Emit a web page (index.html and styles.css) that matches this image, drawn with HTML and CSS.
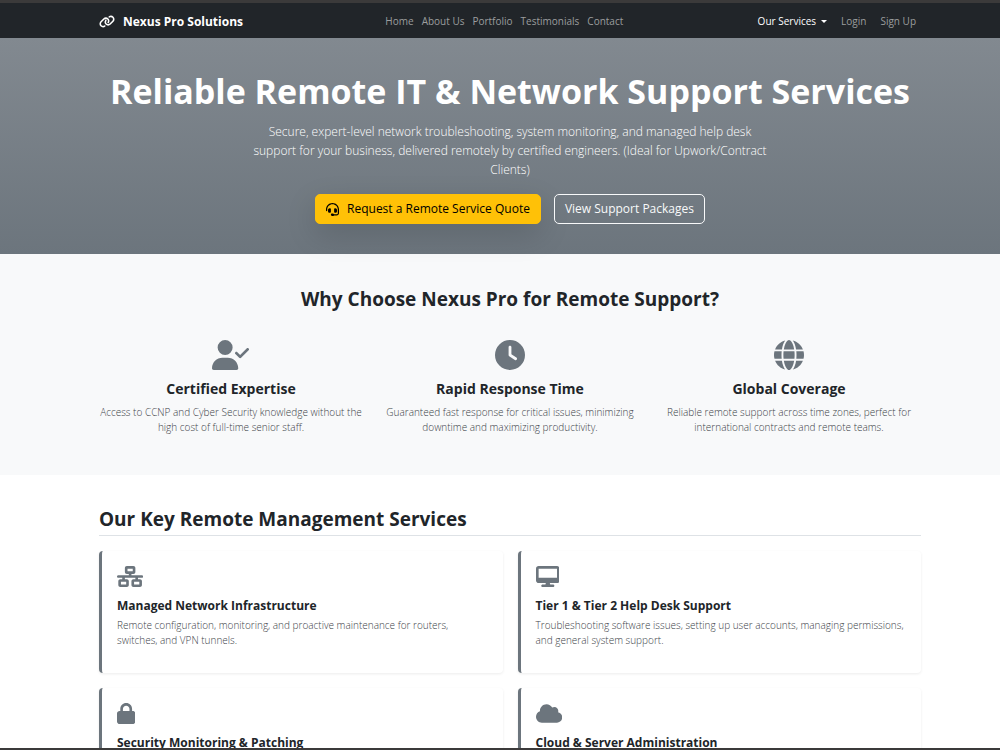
FILE: index.html
```html
<!DOCTYPE html>
<html lang="en">
<head>
<meta charset="utf-8">
<title>Nexus Pro Solutions</title>
<meta name="viewport" content="width=device-width, initial-scale=1">
<link rel="stylesheet" href="styles.css">
</head>

<body>

<header class="navbar">
  <div class="container navbar-inner">
    <a class="brand" href="#">
      <svg class="brand-icon" viewBox="0 0 640 512" aria-hidden="true"><path d="M579.8 267.7c56.5-56.5 56.5-148 0-204.5c-50-50-128.8-56.5-186.3-15.4l-1.6 1.1c-14.4 10.3-17.7 30.3-7.4 44.6s30.3 17.7 44.6 7.4l1.6-1.1c32.1-22.9 76-19.3 103.8 8.6c31.5 31.5 31.5 82.5 0 114L422.3 334.8c-31.5 31.5-82.5 31.5-114 0c-27.9-27.9-31.5-71.8-8.6-103.8l1.1-1.6c10.3-14.4 6.9-34.4-7.4-44.6s-34.4-6.9-44.6 7.4l-1.1 1.6C206.5 251.2 213 330 263 380c56.5 56.5 148 56.5 204.5 0L579.8 267.7zM60.2 244.3c-56.5 56.5-56.5 148 0 204.5c50 50 128.8 56.5 186.3 15.4l1.6-1.1c14.4-10.3 17.7-30.3 7.4-44.6s-30.3-17.7-44.6-7.4l-1.6 1.1c-32.1 22.9-76 19.3-103.8-8.6C74 372 74 321 105.5 289.5L217.7 177.2c31.5-31.5 82.5-31.5 114 0c27.9 27.9 31.5 71.8 8.6 103.9l-1.1 1.6c-10.3 14.4-6.9 34.4 7.4 44.6s34.4 6.9 44.6-7.4l1.1-1.6C433.5 260.8 427 182 377 132c-56.5-56.5-148-56.5-204.5 0L60.2 244.3z"/></svg>
      Nexus Pro Solutions
    </a>
    <nav class="nav-links">
      <a href="#">Home</a>
      <a href="#about">About Us</a>
      <a href="#portfolio">Portfolio</a>
      <a href="#testimonials">Testimonials</a>
      <a href="#contact">Contact</a>
    </nav>
    <div class="nav-user">
      <button class="dropdown" type="button" aria-haspopup="true">Our Services</button>
      <a href="#login">Login</a>
      <a href="#signup">Sign Up</a>
    </div>
  </div>
</header>

<section class="hero">
  <div class="container">
    <h1>Reliable Remote IT &amp; Network Support Services</h1>
    <p class="lead">Secure, expert-level network troubleshooting, system monitoring, and managed help desk support for your business, delivered remotely by certified engineers. (Ideal for Upwork/Contract Clients)</p>
    <div class="hero-buttons">
      <a class="btn btn-warning" href="#contact">
        <svg class="btn-icon" viewBox="0 0 512 512" aria-hidden="true"><path d="M256 48C141.1 48 48 141.1 48 256v40c0 13.3-10.7 24-24 24s-24-10.7-24-24V256C0 114.6 114.6 0 256 0S512 114.6 512 256V400.1c0 48.6-39.4 88-88.1 88L313.6 488c-8.3 14.3-23.8 24-41.6 24H240c-26.5 0-48-21.5-48-48s21.5-48 48-48h32c17.8 0 33.3 9.7 41.6 24l110.4 .1c22.1 0 40-17.9 40-40V256c0-114.9-93.1-208-208-208zM144 208h16c17.7 0 32 14.3 32 32V352c0 17.7-14.3 32-32 32H144c-35.3 0-64-28.7-64-64V272c0-35.3 28.7-64 64-64zm224 0c35.3 0 64 28.7 64 64v48c0 35.3-28.7 64-64 64H352c-17.7 0-32-14.3-32-32V240c0-17.7 14.3-32 32-32h16z"/></svg>
        Request a Remote Service Quote
      </a>
      <a class="btn btn-outline" href="#services">View Support Packages</a>
    </div>
  </div>
</section>

<section class="features" id="about">
  <div class="container">
    <h2>Why Choose Nexus Pro for Remote Support?</h2>
    <div class="feature-row">
      <div class="feature">
        <svg class="feature-icon" viewBox="0 0 640 512" aria-hidden="true"><path d="M96 128a128 128 0 1 1 256 0A128 128 0 1 1 96 128zM0 482.3C0 383.8 79.8 304 178.3 304h91.4C368.2 304 448 383.8 448 482.3c0 16.4-13.3 29.7-29.7 29.7H29.7C13.3 512 0 498.7 0 482.3zM625 177L497 305c-9.4 9.4-24.6 9.4-33.9 0l-64-64c-9.4-9.4-9.4-24.6 0-33.9s24.6-9.4 33.9 0l47 47L591 143c9.4-9.4 24.6-9.4 33.9 0s9.4 24.6 0 33.9z"/></svg>
        <h3>Certified Expertise</h3>
        <p>Access to CCNP and Cyber Security knowledge without the high cost of full-time senior staff.</p>
      </div>
      <div class="feature">
        <svg class="feature-icon" viewBox="0 0 512 512" aria-hidden="true"><path fill-rule="evenodd" d="M256 0a256 256 0 1 1 0 512A256 256 0 1 1 256 0zM232 120V256c0 8 4 15.5 10.7 20l96 64c11 7.4 25.9 4.4 33.3-6.7s4.4-25.9-6.7-33.3L280 243.2V120c0-13.3-10.7-24-24-24s-24 10.7-24 24z"/></svg>
        <h3>Rapid Response Time</h3>
        <p>Guaranteed fast response for critical issues, minimizing downtime and maximizing productivity.</p>
      </div>
      <div class="feature">
        <svg class="feature-icon" viewBox="0 0 512 512" aria-hidden="true"><path d="M352 256c0 22.2-1.2 43.6-3.3 64H163.3c-2.2-20.4-3.3-41.8-3.3-64s1.2-43.6 3.3-64H348.7c2.2 20.4 3.3 41.8 3.3 64zm28.8-64H503.9c5.3 20.5 8.1 41.9 8.1 64s-2.8 43.5-8.1 64H380.8c2.1-20.6 3.2-42 3.2-64s-1.1-43.4-3.2-64zm112.6-32H376.7c-10-63.9-29.8-117.4-55.3-151.6c78.3 20.7 142 77.5 171.9 151.6zm-149.1 0H167.7c6.1-36.4 15.5-68.6 27-94.7c10.5-23.6 22.2-40.7 33.5-51.5C239.4 3.2 248.7 0 256 0s16.6 3.2 27.8 13.8c11.3 10.8 23 27.9 33.5 51.5c11.6 26 20.9 58.2 27 94.7zm-209 0H18.6C48.6 85.9 112.2 29.1 190.6 8.4C165.1 42.6 145.3 96.1 135.3 160zM8.1 192H131.2c-2.1 20.6-3.2 42-3.2 64s1.1 43.4 3.2 64H8.1C2.8 299.5 0 278.1 0 256s2.8-43.5 8.1-64zM194.7 446.6c-11.6-26-20.9-58.2-27-94.6H344.3c-6.1 36.4-15.5 68.6-27 94.6c-10.5 23.6-22.2 40.7-33.5 51.5C272.6 508.8 263.3 512 256 512s-16.6-3.2-27.8-13.8c-11.3-10.8-23-27.9-33.5-51.5zM135.3 352c10 63.9 29.8 117.4 55.3 151.6C112.2 482.9 48.6 426.1 18.6 352H135.3zm358.1 0c-30 74.1-93.6 130.9-171.9 151.6c25.5-34.2 45.2-87.7 55.3-151.6H493.4z"/></svg>
        <h3>Global Coverage</h3>
        <p>Reliable remote support across time zones, perfect for international contracts and remote teams.</p>
      </div>
    </div>
  </div>
</section>

<section class="services" id="services">
  <div class="container">
    <h2>Our Key Remote Management Services</h2>
    <div class="card-grid">
      <div class="card">
        <svg class="card-icon" viewBox="0 0 640 512" aria-hidden="true"><path d="M256 64H384v64H256V64zM240 0c-26.5 0-48 21.5-48 48v96c0 26.5 21.5 48 48 48h48v32H32c-17.7 0-32 14.3-32 32s14.3 32 32 32h96v32H80c-26.5 0-48 21.5-48 48v96c0 26.5 21.5 48 48 48H240c26.5 0 48-21.5 48-48V368c0-26.5-21.5-48-48-48H192V288H448v32H400c-26.5 0-48 21.5-48 48v96c0 26.5 21.5 48 48 48H560c26.5 0 48-21.5 48-48V368c0-26.5-21.5-48-48-48H512V288h96c17.7 0 32-14.3 32-32s-14.3-32-32-32H352V192h48c26.5 0 48-21.5 48-48V48c0-26.5-21.5-48-48-48H240zM96 448V384H224v64H96zm320-64H544v64H416V384z" fill-rule="evenodd"/></svg>
        <h3>Managed Network Infrastructure</h3>
        <p>Remote configuration, monitoring, and proactive maintenance for routers, switches, and VPN tunnels.</p>
      </div>
      <div class="card">
        <svg class="card-icon" viewBox="0 0 576 512" aria-hidden="true"><path fill-rule="evenodd" d="M64 0C28.7 0 0 28.7 0 64V352c0 35.3 28.7 64 64 64H240l-10.7 32H160c-17.7 0-32 14.3-32 32s14.3 32 32 32H416c17.7 0 32-14.3 32-32s-14.3-32-32-32H346.7L336 416H512c35.3 0 64-28.7 64-64V64c0-35.3-28.7-64-64-64H64zM512 64V288H64V64H512z"/></svg>
        <h3>Tier 1 &amp; Tier 2 Help Desk Support</h3>
        <p>Troubleshooting software issues, setting up user accounts, managing permissions, and general system support.</p>
      </div>
      <div class="card">
        <svg class="card-icon" viewBox="0 0 448 512" aria-hidden="true"><path fill-rule="evenodd" d="M144 144v48H304V144c0-44.2-35.8-80-80-80s-80 35.8-80 80zM80 192V144C80 64.5 144.5 0 224 0s144 64.5 144 144v48h16c35.3 0 64 28.7 64 64V448c0 35.3-28.7 64-64 64H64c-35.3 0-64-28.7-64-64V256c0-35.3 28.7-64 64-64H80z"/></svg>
        <h3>Security Monitoring &amp; Patching</h3>
      </div>
      <div class="card">
        <svg class="card-icon" viewBox="0 0 640 512" aria-hidden="true"><path d="M0 336c0 79.5 64.5 144 144 144H512c70.7 0 128-57.3 128-128c0-61.9-44-113.6-102.4-125.4c4.1-10.7 6.4-22.4 6.4-34.6c0-53-43-96-96-96c-19.7 0-38.1 6-53.3 16.2C367 64.2 315.3 32 256 32C167.6 32 96 103.6 96 192c0 2.7 .1 5.4 .2 8.1C40.2 219.8 0 273.2 0 336z"/></svg>
        <h3>Cloud &amp; Server Administration</h3>
      </div>
    </div>
  </div>
</section>

</body>
</html>
```
FILE: styles.css
```css
* {box-sizing: border-box;}
html {height: 100%;}
body {
  margin: 0;
  height: 100%;
  overflow: hidden;
  border-top: 3px solid #3b3a3a;
  color: #212529;
  background: #fff;
  font: 10px/15px "Open Sans", "Noto Sans", sans-serif;
}
/* edge of the window along the bottom */
body::after {
  content: "";
  position: fixed;
  left: 0;
  right: 0;
  bottom: 0;
  height: 2px;
  background: #3b3a3a;
}
h1, h2, h3, p {margin: 0;}
a {color: inherit; text-decoration: none;}
svg {fill: currentColor;}

.navbar, .hero, .features, .services {padding-left: 20px;}
.container {
  max-width: 822px;
  margin: 0 auto;
}

/* navbar */
.navbar {
  color: #9b9d9e;
  background: #212529;
}
.navbar-inner {
  display: flex;
  align-items: center;
  justify-content: space-between;
  height: 35px;
  padding-top: 1px;
}
.brand {
  display: flex;
  align-items: center;
  gap: 8px;
  color: #fff;
  font-size: 12px;
  font-weight: 700;
}
.brand-icon {width: 16px; height: 13px;}
.nav-links {
  display: flex;
  gap: 8px;
  padding-left: 8px;
}
.nav-user {
  display: flex;
  gap: 14px;
  padding-right: 5px;
}
.dropdown {
  display: flex;
  align-items: center;
  gap: 5px;
  padding: 0;
  border: 0;
  color: #fff;
  background: none;
  font: inherit;
}
.dropdown::after {
  content: "";
  border: 3px solid transparent;
  border-top-color: currentColor;
  border-bottom: 0;
}

/* hero */
.hero {
  padding-top: 30px;
  padding-bottom: 30px;
  color: #fff;
  text-align: center;
  background: linear-gradient(#828990, #6c757d);
}
.hero h1 {
  font-size: 34px;
  line-height: 46px;
  font-weight: 700;
}
.lead {
  max-width: 520px;
  margin: 8px auto 15px;
  font-size: 12px;
  line-height: 19px;
  font-weight: 300;
}
.hero-buttons {
  display: flex;
  justify-content: center;
  gap: 13px;
}
.btn {
  display: flex;
  align-items: center;
  gap: 8px;
  padding: 5px 10px;
  border: 1px solid #f8f9fa;
  border-radius: 5px;
  color: #f8f9fa;
  font-size: 12px;
  line-height: 18px;
}
.btn-warning {
  border-color: #ffc107;
  color: #000;
  background: #ffc107;
  box-shadow: 0 10px 30px rgba(0, 0, 0, .15);
}
.btn-icon {width: 13px; height: 13px;}

/* features */
.features {
  padding-top: 31px;
  padding-bottom: 40px;
  text-align: center;
  background: #f8f9fa;
}
.features h2, .services h2 {
  font-size: 19px;
  line-height: 28px;
  font-weight: 700;
}
.feature-row {
  display: grid;
  grid-template-columns: repeat(3, 1fr);
  gap: 15px;
  margin-top: 27px;
}
.feature-icon {
  display: block;
  height: 30px;
  margin: 0 auto;
  color: #6c757d;
}
.feature h3 {
  margin: 9px 0 6px;
  font-size: 14px;
  line-height: 20px;
}
.feature p, .card p {
  color: #3c4248;
  font-weight: 300;
}

/* services */
.services {padding-top: 30px;}
.services h2 {
  padding-bottom: 2px;
  border-bottom: 1px solid #dee2e6;
}
.card-grid {
  display: grid;
  grid-template-columns: 1fr 1fr;
  gap: 15px;
  margin-top: 15px;
}
.card {
  min-height: 122px;
  padding: 15px;
  border-left: 3px solid #6c757d;
  border-radius: 4px;
  background: #fff;
  box-shadow: 0 1px 3px rgba(0, 0, 0, .08);
}
.card-icon {
  display: block;
  height: 21px;
  color: #6c757d;
}
.card h3 {
  margin: 10px 0 3px;
  font-size: 12px;
  line-height: 18px;
}
```
